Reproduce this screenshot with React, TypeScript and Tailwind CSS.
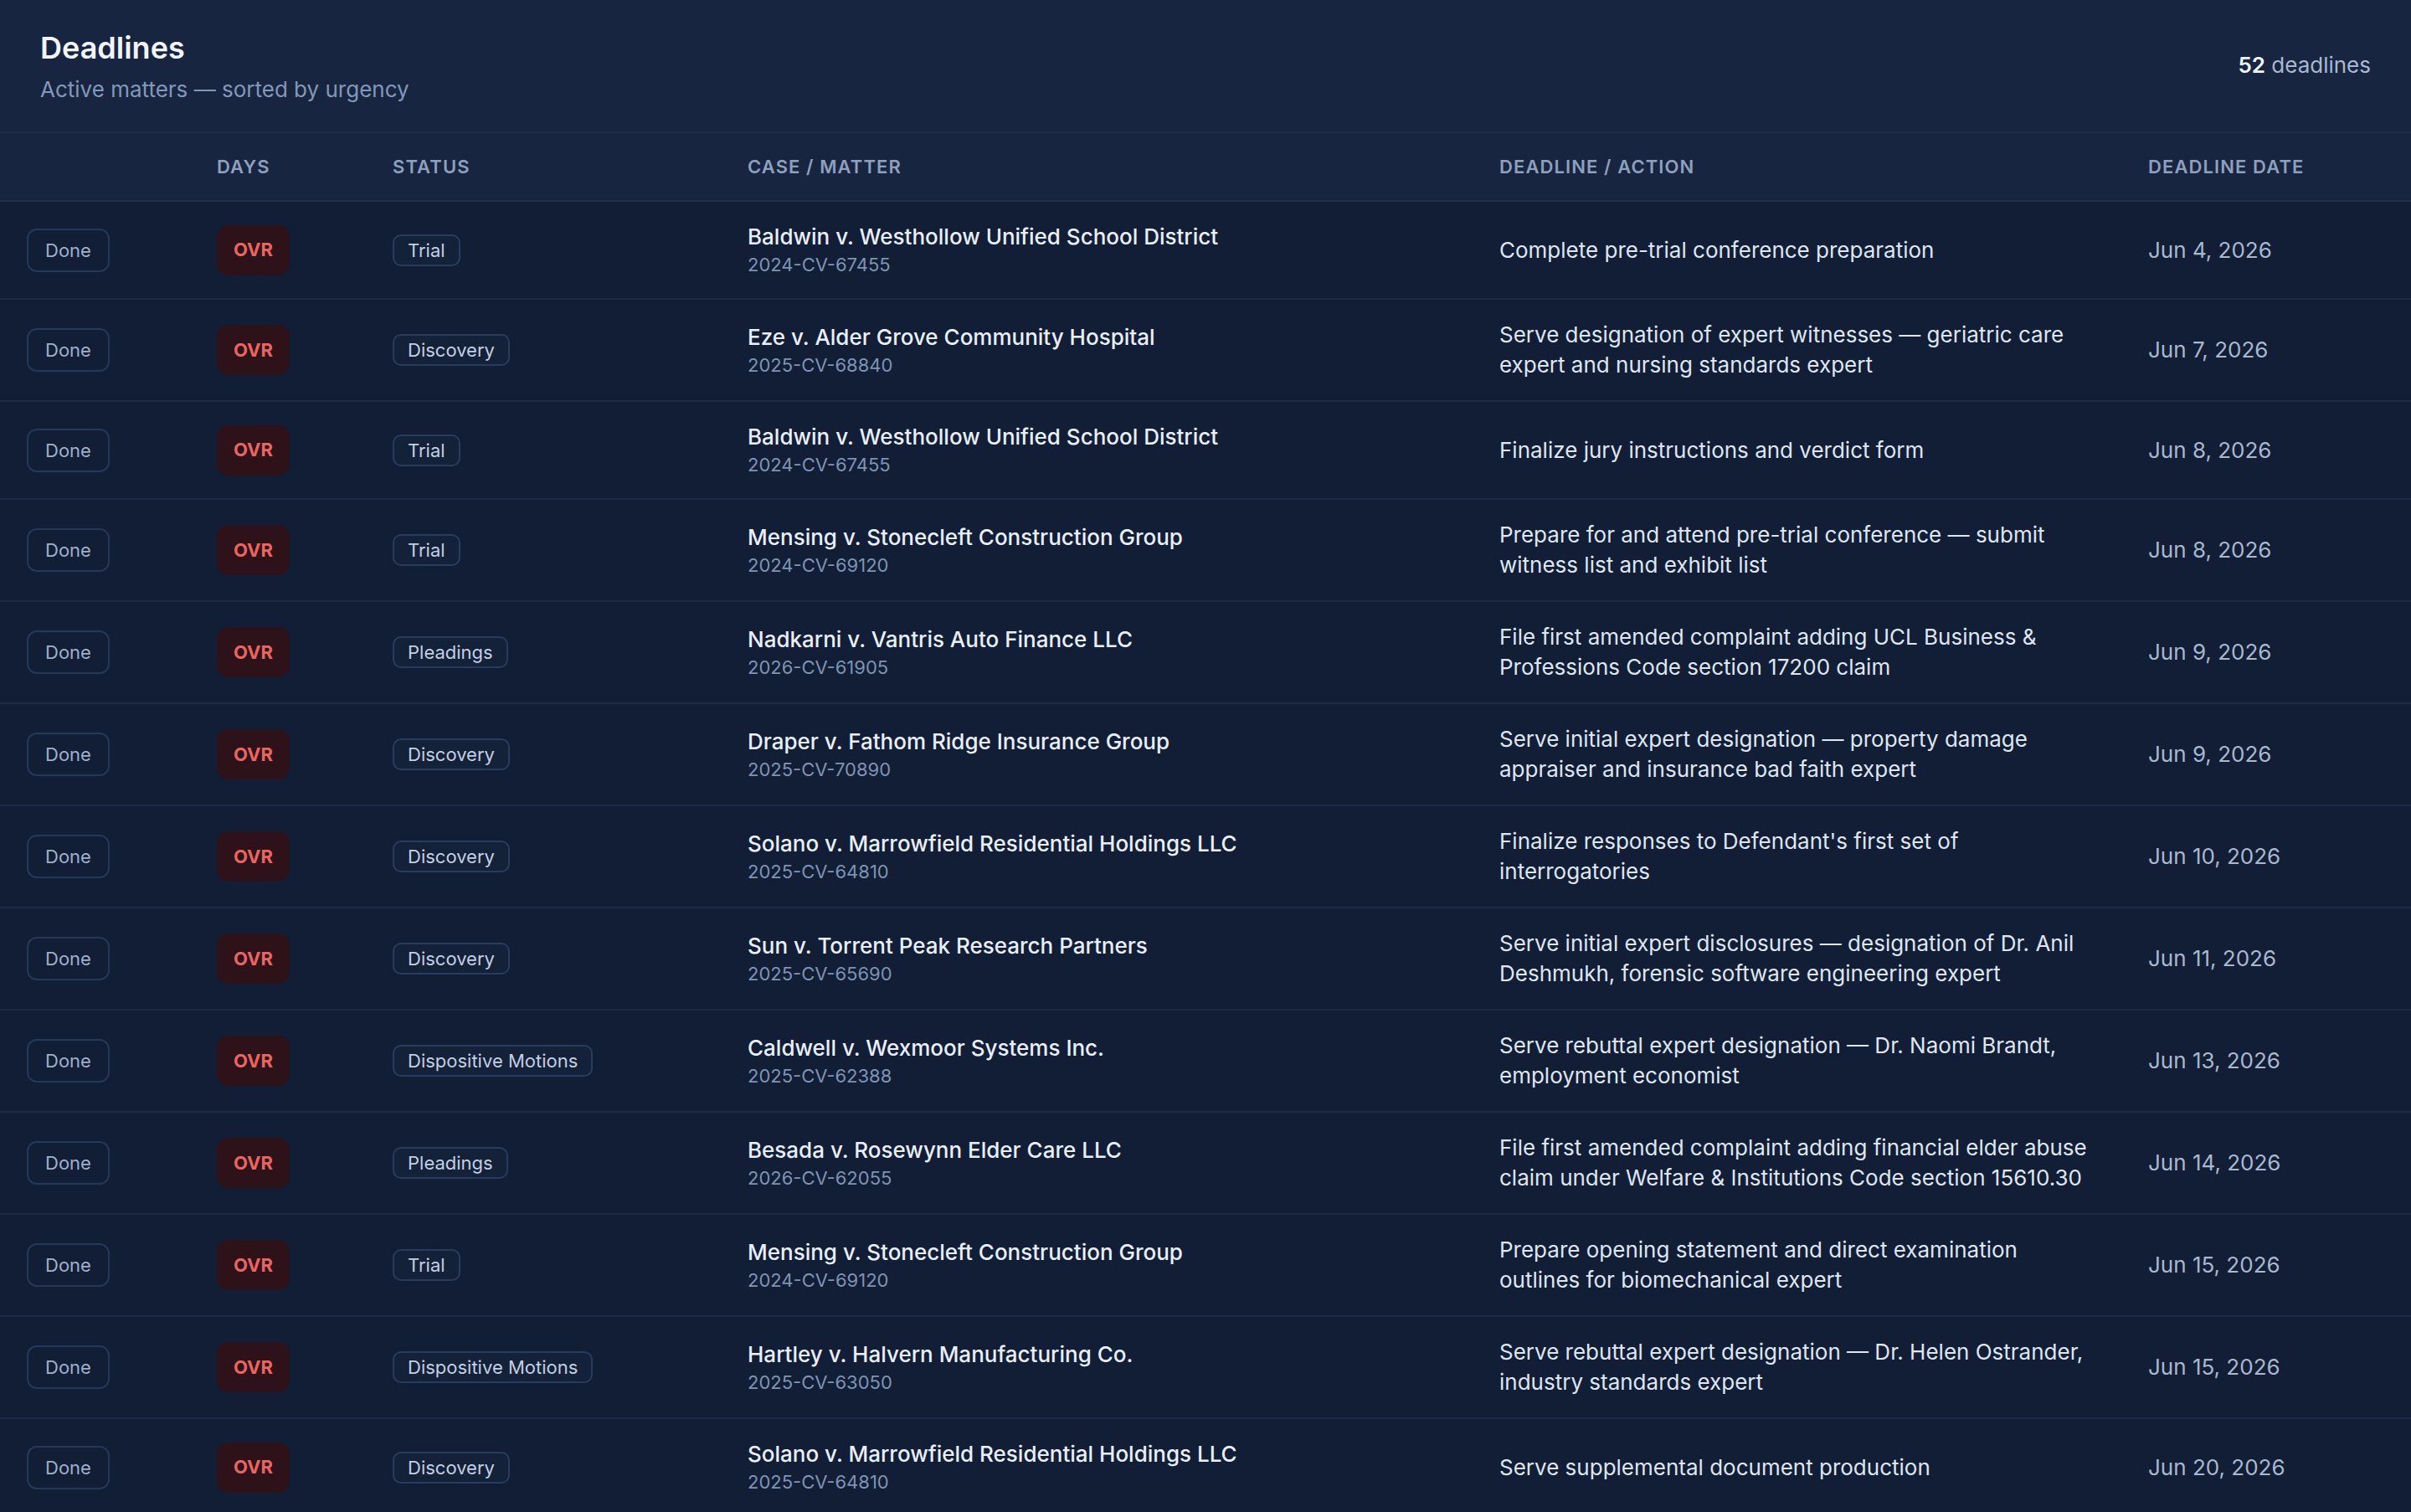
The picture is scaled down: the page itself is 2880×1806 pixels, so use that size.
import React from "react";

type Deadline = {
  status: string;
  caseName: string;
  caseNo: string;
  action: string;
  date: string;
};

const deadlines: Deadline[] = [
  {
    status: "Trial",
    caseName: "Baldwin v. Westhollow Unified School District",
    caseNo: "2024-CV-67455",
    action: "Complete pre-trial conference preparation",
    date: "Jun 4, 2026",
  },
  {
    status: "Discovery",
    caseName: "Eze v. Alder Grove Community Hospital",
    caseNo: "2025-CV-68840",
    action:
      "Serve designation of expert witnesses — geriatric care expert and nursing standards expert",
    date: "Jun 7, 2026",
  },
  {
    status: "Trial",
    caseName: "Baldwin v. Westhollow Unified School District",
    caseNo: "2024-CV-67455",
    action: "Finalize jury instructions and verdict form",
    date: "Jun 8, 2026",
  },
  {
    status: "Trial",
    caseName: "Mensing v. Stonecleft Construction Group",
    caseNo: "2024-CV-69120",
    action:
      "Prepare for and attend pre-trial conference — submit witness list and exhibit list",
    date: "Jun 8, 2026",
  },
  {
    status: "Pleadings",
    caseName: "Nadkarni v. Vantris Auto Finance LLC",
    caseNo: "2026-CV-61905",
    action:
      "File first amended complaint adding UCL Business & Professions Code section 17200 claim",
    date: "Jun 9, 2026",
  },
  {
    status: "Discovery",
    caseName: "Draper v. Fathom Ridge Insurance Group",
    caseNo: "2025-CV-70890",
    action:
      "Serve initial expert designation — property damage appraiser and insurance bad faith expert",
    date: "Jun 9, 2026",
  },
  {
    status: "Discovery",
    caseName: "Solano v. Marrowfield Residential Holdings LLC",
    caseNo: "2025-CV-64810",
    action: "Finalize responses to Defendant's first set of interrogatories",
    date: "Jun 10, 2026",
  },
  {
    status: "Discovery",
    caseName: "Sun v. Torrent Peak Research Partners",
    caseNo: "2025-CV-65690",
    action:
      "Serve initial expert disclosures — designation of Dr. Anil Deshmukh, forensic software engineering expert",
    date: "Jun 11, 2026",
  },
  {
    status: "Dispositive Motions",
    caseName: "Caldwell v. Wexmoor Systems Inc.",
    caseNo: "2025-CV-62388",
    action:
      "Serve rebuttal expert designation — Dr. Naomi Brandt, employment economist",
    date: "Jun 13, 2026",
  },
  {
    status: "Pleadings",
    caseName: "Besada v. Rosewynn Elder Care LLC",
    caseNo: "2026-CV-62055",
    action:
      "File first amended complaint adding financial elder abuse claim under Welfare & Institutions Code section 15610.30",
    date: "Jun 14, 2026",
  },
  {
    status: "Trial",
    caseName: "Mensing v. Stonecleft Construction Group",
    caseNo: "2024-CV-69120",
    action:
      "Prepare opening statement and direct examination outlines for biomechanical expert",
    date: "Jun 15, 2026",
  },
  {
    status: "Dispositive Motions",
    caseName: "Hartley v. Halvern Manufacturing Co.",
    caseNo: "2025-CV-63050",
    action:
      "Serve rebuttal expert designation — Dr. Helen Ostrander, industry standards expert",
    date: "Jun 15, 2026",
  },
  {
    status: "Discovery",
    caseName: "Solano v. Marrowfield Residential Holdings LLC",
    caseNo: "2025-CV-64810",
    action: "Serve supplemental document production",
    date: "Jun 20, 2026",
  },
];

const headCell =
  "px-8 py-6 text-left text-[22px] leading-8 font-semibold uppercase tracking-[0.05em] text-[#8ea0be]";

export default function App() {
  return (
    <div className="min-h-screen bg-[#111e36] font-[Inter,sans-serif] antialiased">
      <header className="flex items-center justify-between border-b-2 border-[#1f2e4a] bg-[#172540] px-12 pt-[29px] pb-[30px]">
        <div>
          <h1 className="text-[36px] leading-[56px] font-semibold text-[#f1f5fb]">
            Deadlines
          </h1>
          <p className="mt-[2px] text-[26px] leading-10 text-[#8398b8]">
            Active matters — sorted by urgency
          </p>
        </div>
        <div className="text-[26px] leading-10 text-[#a9b9d2]">
          <span className="font-semibold text-[#eef3fa]">52</span> deadlines
        </div>
      </header>

      <table className="w-full table-fixed border-collapse">
        <colgroup>
          <col className="w-[227px]" />
          <col className="w-[210px]" />
          <col className="w-[424px]" />
          <col className="w-[898px]" />
          <col className="w-[775px]" />
          <col />
        </colgroup>
        <thead className="bg-[#172540]">
          <tr className="border-b-2 border-[#1f2e4a]">
            <th className={headCell}></th>
            <th className={headCell}>Days</th>
            <th className={headCell}>Status</th>
            <th className={headCell}>Case / Matter</th>
            <th className={headCell}>Deadline / Action</th>
            <th className={headCell}>Deadline Date</th>
          </tr>
        </thead>
        <tbody>
          {deadlines.map((d, i) => (
            <tr key={i} className="border-b-2 border-[#1c2b47] align-middle">
              <td className="px-8 py-6">
                <button className="rounded-[12px] border-2 border-[#26385a] px-5 py-2 text-[22px] leading-8 text-[#9fb0cb]">
                  Done
                </button>
              </td>
              <td className="px-8 py-6">
                <span className="flex h-[60px] w-[87px] items-center justify-center rounded-[14px] bg-[#2d1219] text-[22px] font-bold text-[#eb6560]">
                  OVR
                </span>
              </td>
              <td className="px-8 py-6">
                <span className="inline-block rounded-[10px] border-2 border-[#2a3c5e] bg-[#132139] px-4 py-[2px] text-[22px] leading-[30px] whitespace-nowrap text-[#c3cfe2]">
                  {d.status}
                </span>
              </td>
              <td className="px-8 py-6">
                <div className="text-[26px] leading-9 font-medium text-[#e9eff8]">
                  {d.caseName}
                </div>
                <div className="text-[22px] leading-[31px] text-[#7f93b3]">
                  {d.caseNo}
                </div>
              </td>
              <td className="px-8 py-6 text-[26px] leading-9 text-[#dfe6f1]">
                {d.action}
              </td>
              <td className="px-8 py-6 text-[26px] leading-9 text-[#a9b8cf]">
                {d.date}
              </td>
            </tr>
          ))}
        </tbody>
      </table>
    </div>
  );
}
